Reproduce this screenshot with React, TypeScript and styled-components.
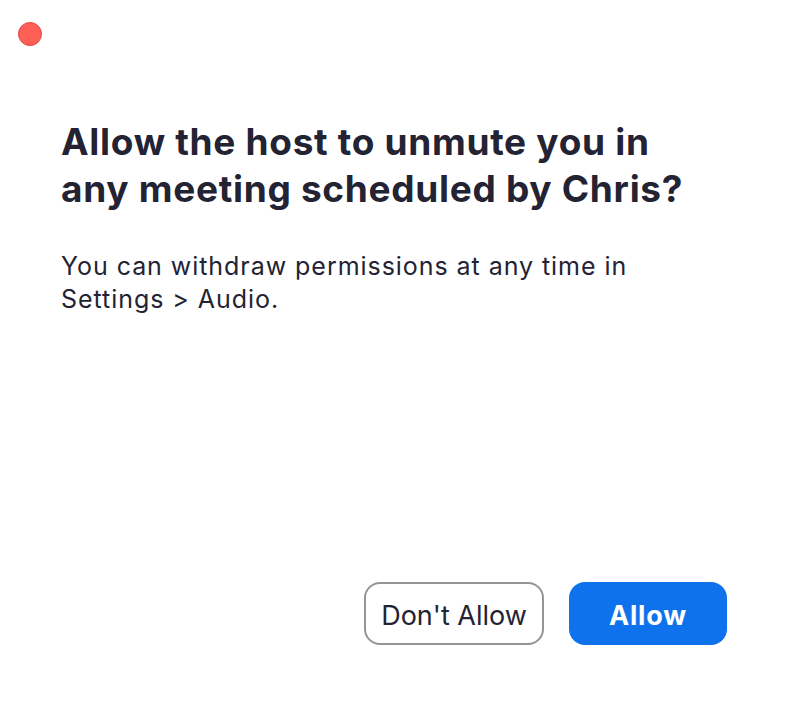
import styled, { createGlobalStyle } from "styled-components";

const GlobalStyle = createGlobalStyle`
	html, body {
		margin: 0;
		padding: 0;
		background: #ffffff;
	}
	body {
		font-family: Inter, "Noto Sans", sans-serif;
		-webkit-font-smoothing: antialiased;
	}
`;

const Window = styled.div`
	width: 788px;
	height: 704px;
	box-sizing: border-box;
	display: flex;
	flex-direction: column;
	background: #ffffff;
	color: #232333;
`;

const TitleBar = styled.div`
	height: 46px;
	padding: 22px 0 0 18px;
	box-sizing: border-box;
`;

const CloseDot = styled.div`
	width: 24px;
	height: 24px;
	border-radius: 50%;
	background: #fe5f57;
	border: 1px solid #e2463f;
	box-sizing: border-box;
`;

const Content = styled.div`
	flex: 1;
	display: flex;
	flex-direction: column;
	padding: 72px 40px 0 61px;
`;

const Title = styled.h1`
	margin: 0;
	font-size: 37px;
	font-weight: 700;
	line-height: 47px;
	letter-spacing: 0.7px;
	white-space: nowrap;
	color: #232333;
`;

const Message = styled.p`
	margin: 38px 0 0 0;
	font-size: 25px;
	font-weight: 400;
	line-height: 33px;
	letter-spacing: 0.95px;
	white-space: nowrap;
	color: #232333;
`;

const Footer = styled.div`
	display: flex;
	justify-content: flex-end;
	gap: 25px;
	padding: 0 61px 59px 0;
`;

const Button = styled.button<{ $primary?: boolean }>`
	height: 63px;
	padding: 4px 10px 0;
	border-radius: 16px;
	font-family: Inter, "Noto Sans", sans-serif;
	font-size: 27px;
	cursor: pointer;
	box-sizing: border-box;
	width: ${(p) => (p.$primary ? "158px" : "180px")};
	font-weight: ${(p) => (p.$primary ? 700 : 400)};
	letter-spacing: ${(p) => (p.$primary ? "0.8px" : "0")};
	color: ${(p) => (p.$primary ? "#ffffff" : "#232333")};
	background: ${(p) => (p.$primary ? "#0e72ed" : "#ffffff")};
	border: ${(p) => (p.$primary ? "none" : "2px solid #949494")};
`;

const App = () => {
	return (
		<>
			<GlobalStyle />
			<Window>
				<TitleBar>
					<CloseDot />
				</TitleBar>
				<Content>
					<Title>
						Allow the host to unmute you in
						<br />
						any meeting scheduled by Chris?
					</Title>
					<Message>
						You can withdraw permissions at any time in
						<br />
						Settings &gt; Audio.
					</Message>
				</Content>
				<Footer>
					<Button>Don't Allow</Button>
					<Button $primary>Allow</Button>
				</Footer>
			</Window>
		</>
	);
};

export default App;
